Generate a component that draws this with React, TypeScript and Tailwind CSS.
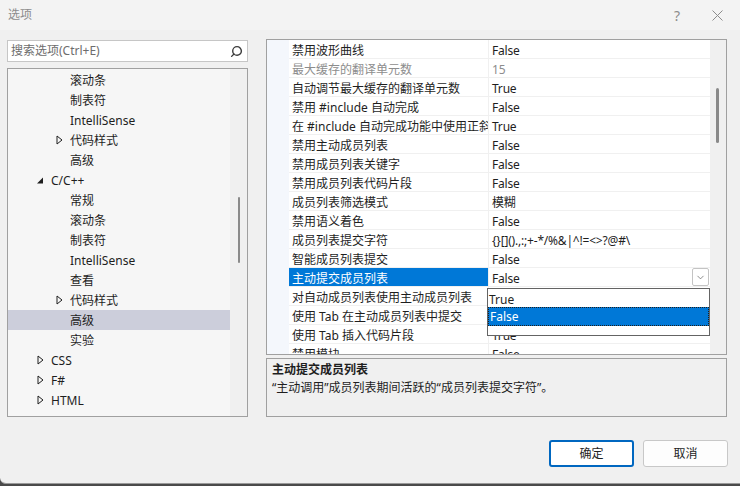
import { ChevronDown, Search } from "lucide-react";

const FONT = { fontFamily: '"Noto Sans", "Noto Sans CJK SC", sans-serif' };

type TreeItem = { label: string; level: 1 | 2; exp?: "closed" | "open"; selected?: boolean };

const tree: TreeItem[] = [
  { label: "滚动条", level: 2 },
  { label: "制表符", level: 2 },
  { label: "IntelliSense", level: 2 },
  { label: "代码样式", level: 2, exp: "closed" },
  { label: "高级", level: 2 },
  { label: "C/C++", level: 1, exp: "open" },
  { label: "常规", level: 2 },
  { label: "滚动条", level: 2 },
  { label: "制表符", level: 2 },
  { label: "IntelliSense", level: 2 },
  { label: "查看", level: 2 },
  { label: "代码样式", level: 2, exp: "closed" },
  { label: "高级", level: 2, selected: true },
  { label: "实验", level: 2 },
  { label: "CSS", level: 1, exp: "closed" },
  { label: "F#", level: 1, exp: "closed" },
  { label: "HTML", level: 1, exp: "closed" },
];

type Prop = { name: string; value: string; disabled?: boolean; selected?: boolean };

const props: Prop[] = [
  { name: "禁用波形曲线", value: "False" },
  { name: "最大缓存的翻译单元数", value: "15", disabled: true },
  { name: "自动调节最大缓存的翻译单元数", value: "True" },
  { name: "禁用 #include 自动完成", value: "False" },
  { name: "在 #include 自动完成功能中使用正斜杠", value: "True" },
  { name: "禁用主动成员列表", value: "False" },
  { name: "禁用成员列表关键字", value: "False" },
  { name: "禁用成员列表代码片段", value: "False" },
  { name: "成员列表筛选模式", value: "模糊" },
  { name: "禁用语义着色", value: "False" },
  { name: "成员列表提交字符", value: "{}[]().,:;+-*/%&|^!=<>?@#\\" },
  { name: "智能成员列表提交", value: "False" },
  { name: "主动提交成员列表", value: "False", selected: true },
  { name: "对自动成员列表使用主动成员列表", value: "True" },
  { name: "使用 Tab 在主动成员列表中提交", value: "False" },
  { name: "使用 Tab 插入代码片段", value: "True" },
  { name: "禁用模块", value: "False" },
];

function Expander({ kind }: { kind?: "closed" | "open" }) {
  if (kind === "closed")
    return (
      <svg width="7" height="10" viewBox="0 0 7 10" aria-hidden>
        <path d="M1 1 L6 5 L1 9 Z" fill="none" stroke="#1e1e1e" strokeWidth="1" />
      </svg>
    );
  if (kind === "open")
    return (
      <svg width="7" height="7" viewBox="0 0 7 7" aria-hidden>
        <path d="M6 0.5 L6 6.5 L0 6.5 Z" fill="#1e1e1e" />
      </svg>
    );
  return null;
}

export default function App() {
  return (
    <div className="w-[740px] h-[486px] bg-[#4a4a4a] overflow-hidden" style={FONT}>
      <div className="relative flex h-[484px] flex-col rounded-bl-[6px] rounded-tl-[6px] border-b border-[#9a9a9a] bg-[#f0f0f0] text-[12px] text-[#1e1e1e]">
        {/* title bar */}
        <div className="flex h-[30px] items-center justify-between bg-[#f3f3f3] pl-[8px] pr-[17px]">
          <span className="text-[12px] text-[#8c8c8c]">选项</span>
          <div className="flex items-center gap-[32px] text-[#8c8c8c]">
            <span className="text-[14px]">?</span>
            <svg width="11" height="11" viewBox="0 0 11 11" aria-hidden>
              <path d="M0.5 0.5 L10.5 10.5 M10.5 0.5 L0.5 10.5" stroke="#8c8c8c" strokeWidth="1" />
            </svg>
          </div>
        </div>

        <div className="flex flex-1 gap-[18px] pl-[7px]">
          {/* left */}
          <div className="flex w-[241px] flex-col pt-[10px]">
            <div className="flex h-[22px] items-center justify-between border border-[#c6c6c6] bg-white pl-[3px] pr-[4px]">
              <span className="text-[#6d6d6d]">搜索选项(Ctrl+E)</span>
              <Search className="size-[13px] -scale-x-100 text-[#3c3c3c]" strokeWidth={2.6} />
            </div>
            <div className="mt-[6px] flex h-[349px] border border-[#a0a0a0] bg-[#f6f6f6]">
              <div className="flex flex-1 flex-col overflow-hidden pt-[1px]">
                {tree.map((t, i) => (
                  <div
                    key={i}
                    className={`flex h-[20px] shrink-0 items-center ${t.level === 1 ? "pl-[29px]" : "pl-[48px]"} ${t.selected ? "bg-[#cccedb]" : ""}`}
                  >
                    <span className="flex w-[14px] items-center">
                      <Expander kind={t.exp} />
                    </span>
                    <span className="whitespace-nowrap pt-[1px] leading-[20px]">{t.label}</span>
                  </div>
                ))}
              </div>
              <div className="relative w-[17px] bg-[#f0f0f0]">
                <div className="absolute left-[8px] top-[128px] h-[66px] w-[2px] rounded bg-[#8a8a8a]" />
              </div>
            </div>
          </div>

          {/* right */}
          <div className="flex w-[461px] flex-col pt-[9px]">
            <div className="relative flex h-[316px] border border-[#a0a0a0] bg-white">
              <div className="w-[22px] bg-[#f4f7fc]" />
              <div className="flex flex-1 flex-col overflow-hidden">
                {props.map((p, i) => (
                  <div key={i} className="flex h-[19px] shrink-0 border-b border-[#f0f0f0]">
                    <div
                      className={`w-[200px] overflow-hidden whitespace-nowrap border-r border-[#f0f0f0] pl-[3px] pt-[3px] leading-[15px] ${p.selected ? "bg-[#0078d7] text-white" : p.disabled ? "text-[#8d8d8d]" : ""}`}
                    >
                      {p.name}
                    </div>
                    <div
                      className={`flex flex-1 items-center justify-between overflow-hidden whitespace-nowrap pl-[3px] pr-[1px] ${p.disabled ? "text-[#8d8d8d]" : ""}`}
                    >
                      <span className="pt-[3px] leading-[15px] tracking-[-0.2px]">{p.value}</span>
                      {p.selected && (
                        <span className="flex h-[18px] w-[17px] items-center justify-center rounded-[2px] border border-[#c4c4c4] bg-white">
                          <ChevronDown className="size-[11px] text-[#5a5a5a]" strokeWidth={1.5} />
                        </span>
                      )}
                    </div>
                  </div>
                ))}
              </div>
              <div className="relative w-[16px] bg-[#f0f0f0]">
                <div className="absolute left-[6px] top-[48px] h-[55px] w-[3px] rounded bg-[#8a8a8a]" />
              </div>

              {/* dropdown list */}
              <div className="absolute left-[220px] top-[248px] flex h-[48px] w-[223px] flex-col border border-[#646464] bg-white">
                <div className="h-[18px] pl-[1px] pt-[2px] leading-[17px]">True</div>
                <div className="h-[19px] border border-dotted border-[#1e1e1e] bg-[#0078d7] pl-[1px] pt-[1px] leading-[16px] text-white">
                  False
                </div>
              </div>
            </div>

            <div className="mt-[3px] flex h-[59px] flex-col border border-[#a0a0a0] bg-[#f0f0f0] px-[5px] pt-[2px]">
              <div className="font-bold leading-[18px]">主动提交成员列表</div>
              <div className="leading-[18px]">“主动调用”成员列表期间活跃的“成员列表提交字符”。</div>
            </div>
          </div>
        </div>

        {/* buttons */}
        <div className="flex justify-end gap-[9px] pb-[16px] pr-[12px]">
          <button className="h-[27px] w-[85px] rounded-[3px] border-2 border-[#0067c0] bg-white">确定</button>
          <button className="h-[27px] w-[85px] rounded-[3px] border border-[#c8c8c8] bg-[#fdfdfd]">取消</button>
        </div>
      </div>
    </div>
  );
}
